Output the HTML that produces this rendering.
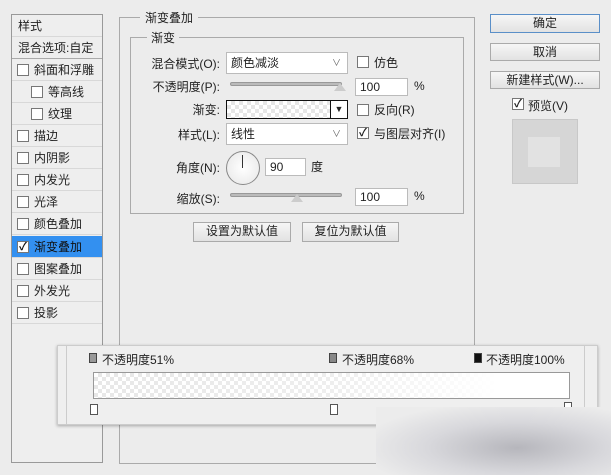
<!DOCTYPE html>
<html><head><meta charset="utf-8"><style>
*{box-sizing:border-box;margin:0;padding:0}
body{width:611px;height:475px;background:#ececec;font-family:"Liberation Sans","Noto Sans CJK SC",sans-serif;font-size:12px;color:#222;position:relative;overflow:hidden}
.a{position:absolute}
.cb{position:absolute;width:12px;height:12px;border:1px solid #777;background:#fff}
.row{position:absolute;left:12px;width:90px;height:22px;border-bottom:1px solid #d8d8d8;line-height:22px}
.btn{position:absolute;border:1px solid #aaa;background:linear-gradient(#f6f6f6,#e2e2e2);text-align:center;line-height:17px;font-size:12px}
.inp{position:absolute;background:#fff;border:1px solid #bbb;padding-left:4px;line-height:16px}
.lbl{position:absolute;text-align:right;width:100px}
.sl{position:absolute;height:4px;border-radius:2px;background:#bbb;border:1px solid #999}
.chk{font-size:11px;line-height:10px;text-align:center;font-weight:bold}
.checker{background-color:#fff;background-image:linear-gradient(45deg,#e6e6e6 25%,transparent 25%,transparent 75%,#e6e6e6 75%),linear-gradient(45deg,#e6e6e6 25%,transparent 25%,transparent 75%,#e6e6e6 75%);background-size:8px 8px;background-position:0 0,4px 4px}
</style></head><body>
<div class="a" style="left:11px;top:14px;width:92px;height:449px;border:1px solid #999;background:#eee"></div>
<div class="row" style="top:15px;padding-left:6px">样式</div>
<div class="row" style="top:37px;padding-left:6px;border-bottom:1px solid #aaa">混合选项:自定</div>
<div class="row" style="top:59px"><div class="cb" style="left:5px;top:5px"></div><span style="position:absolute;left:22px">斜面和浮雕</span></div>
<div class="row" style="top:81px"><div class="cb" style="left:19px;top:5px"></div><span style="position:absolute;left:36px">等高线</span></div>
<div class="row" style="top:103px"><div class="cb" style="left:19px;top:5px"></div><span style="position:absolute;left:36px">纹理</span></div>
<div class="row" style="top:125px"><div class="cb" style="left:5px;top:5px"></div><span style="position:absolute;left:22px">描边</span></div>
<div class="row" style="top:147px"><div class="cb" style="left:5px;top:5px"></div><span style="position:absolute;left:22px">内阴影</span></div>
<div class="row" style="top:169px"><div class="cb" style="left:5px;top:5px"></div><span style="position:absolute;left:22px">内发光</span></div>
<div class="row" style="top:191px"><div class="cb" style="left:5px;top:5px"></div><span style="position:absolute;left:22px">光泽</span></div>
<div class="row" style="top:213px"><div class="cb" style="left:5px;top:5px"></div><span style="position:absolute;left:22px">颜色叠加</span></div>
<div class="row" style="top:236px;background:#3390f0;color:#111"><div class="cb chk" style="left:5px;top:5px">✓</div><span style="position:absolute;left:22px">渐变叠加</span></div>
<div class="row" style="top:258px"><div class="cb" style="left:5px;top:5px"></div><span style="position:absolute;left:22px">图案叠加</span></div>
<div class="row" style="top:280px"><div class="cb" style="left:5px;top:5px"></div><span style="position:absolute;left:22px">外发光</span></div>
<div class="row" style="top:302px"><div class="cb" style="left:5px;top:5px"></div><span style="position:absolute;left:22px">投影</span></div>
<div class="a" style="left:119px;top:17px;width:356px;height:447px;border:1px solid #aaa"></div>
<div class="a" style="left:140px;top:9px;background:#ececec;padding:0 5px">渐变叠加</div>
<div class="a" style="left:130px;top:37px;width:334px;height:177px;border:1px solid #aaa"></div>
<div class="a" style="left:147px;top:29px;background:#ececec;padding:0 4px">渐变</div>
<div class="lbl" style="left:120px;top:55px">混合模式(O):</div>
<div class="inp" style="left:226px;top:52px;width:122px;height:22px;line-height:20px">颜色减淡<span style="position:absolute;right:6px;color:#666;font-size:9px">∨</span></div>
<div class="cb" style="left:357px;top:56px"></div><div class="a" style="left:374px;top:54px">仿色</div>
<div class="lbl" style="left:120px;top:78px">不透明度(P):</div>
<div class="sl" style="left:230px;top:82px;width:112px"></div>
<div class="a" style="left:334px;top:83px;width:0;height:0;border:6px solid transparent;border-bottom:8px solid #ccc;border-top:0"></div>
<div class="inp" style="left:355px;top:78px;width:53px;height:18px">100</div><div class="a" style="left:414px;top:79px">%</div>
<div class="lbl" style="left:120px;top:101px">渐变:</div>
<div class="a checker" style="left:226px;top:100px;width:122px;height:19px;border:1px solid #111"></div>
<div class="a" style="left:330px;top:100px;width:18px;height:19px;border:1px solid #111;background:#fff;font-size:9px;text-align:center;line-height:17px">▼</div>
<div class="cb" style="left:357px;top:104px"></div><div class="a" style="left:374px;top:101px">反向(R)</div>
<div class="lbl" style="left:120px;top:126px">样式(L):</div>
<div class="inp" style="left:226px;top:123px;width:122px;height:22px;line-height:20px">线性<span style="position:absolute;right:6px;color:#666;font-size:9px">∨</span></div>
<div class="cb chk" style="left:357px;top:127px">✓</div><div class="a" style="left:374px;top:125px">与图层对齐(I)</div>
<div class="lbl" style="left:120px;top:159px">角度(N):</div>
<div class="a" style="left:226px;top:151px;width:34px;height:34px;border-radius:50%;border:1px solid #888;background:radial-gradient(#fff,#e6e6e6)"></div>
<div class="a" style="left:242px;top:155px;width:1px;height:13px;background:#333"></div>
<div class="inp" style="left:265px;top:158px;width:41px;height:18px">90</div><div class="a" style="left:311px;top:158px">度</div>
<div class="lbl" style="left:120px;top:190px">缩放(S):</div>
<div class="sl" style="left:230px;top:193px;width:112px"></div>
<div class="a" style="left:291px;top:194px;width:0;height:0;border:6px solid transparent;border-bottom:8px solid #ccc;border-top:0"></div>
<div class="inp" style="left:355px;top:188px;width:53px;height:18px">100</div><div class="a" style="left:414px;top:189px">%</div>
<div class="btn" style="left:193px;top:222px;width:98px;height:20px">设置为默认值</div>
<div class="btn" style="left:302px;top:222px;width:97px;height:20px">复位为默认值</div>
<div class="btn" style="left:490px;top:14px;width:110px;height:19px;border-color:#5a8fc8">确定</div>
<div class="btn" style="left:490px;top:43px;width:110px;height:18px">取消</div>
<div class="btn" style="left:490px;top:71px;width:110px;height:18px">新建样式(W)...</div>
<div class="cb chk" style="left:512px;top:98px">✓</div><div class="a" style="left:528px;top:97px">预览(V)</div>
<div class="a" style="left:512px;top:119px;width:66px;height:65px;background:#d6d6d6;border:1px solid #c8c8c8"></div>
<div class="a" style="left:528px;top:137px;width:32px;height:30px;background:#e2e2e2"></div>
<div class="a" style="left:57px;top:345px;width:541px;height:80px;background:#efefef;border:1px solid #ccc;box-shadow:0 1px 3px rgba(0,0,0,.3)"></div>
<div class="a" style="left:66px;top:345px;width:1px;height:80px;background:#ccc"></div>
<div class="a" style="left:584px;top:345px;width:1px;height:80px;background:#ccc"></div>
<div class="a" style="left:89px;top:353px;width:8px;height:10px;background:#999;border:1px solid #444"></div>
<div class="a" style="left:102px;top:351px;font-size:12px">不透明度51%</div>
<div class="a" style="left:329px;top:353px;width:8px;height:10px;background:#888;border:1px solid #444"></div>
<div class="a" style="left:342px;top:351px;font-size:12px">不透明度68%</div>
<div class="a" style="left:474px;top:353px;width:8px;height:10px;background:#111;border:1px solid #444"></div>
<div class="a" style="left:486px;top:351px;font-size:12px">不透明度100%</div>
<div class="a" style="left:93px;top:372px;width:477px;height:27px;border:1px solid #999;background:linear-gradient(90deg,rgba(255,255,255,.3),rgba(255,255,255,.5) 50%,#fff 85%),repeating-conic-gradient(#ddd 0 25%,#fff 0 50%) 0 0/8px 8px"></div>
<div class="a" style="left:90px;top:404px;width:8px;height:11px;border:1px solid #555;background:#fff"></div>
<div class="a" style="left:330px;top:404px;width:8px;height:11px;border:1px solid #555;background:#fff"></div>
<div class="a" style="left:564px;top:402px;width:8px;height:6px;border:1px solid #555;background:#fff"></div>
<div class="a" style="left:376px;top:407px;width:235px;height:68px;background:radial-gradient(ellipse at 60% 60%,#b6b6bc,#d8d8dc 45%,#ececec 80%)"></div>
</body></html>
